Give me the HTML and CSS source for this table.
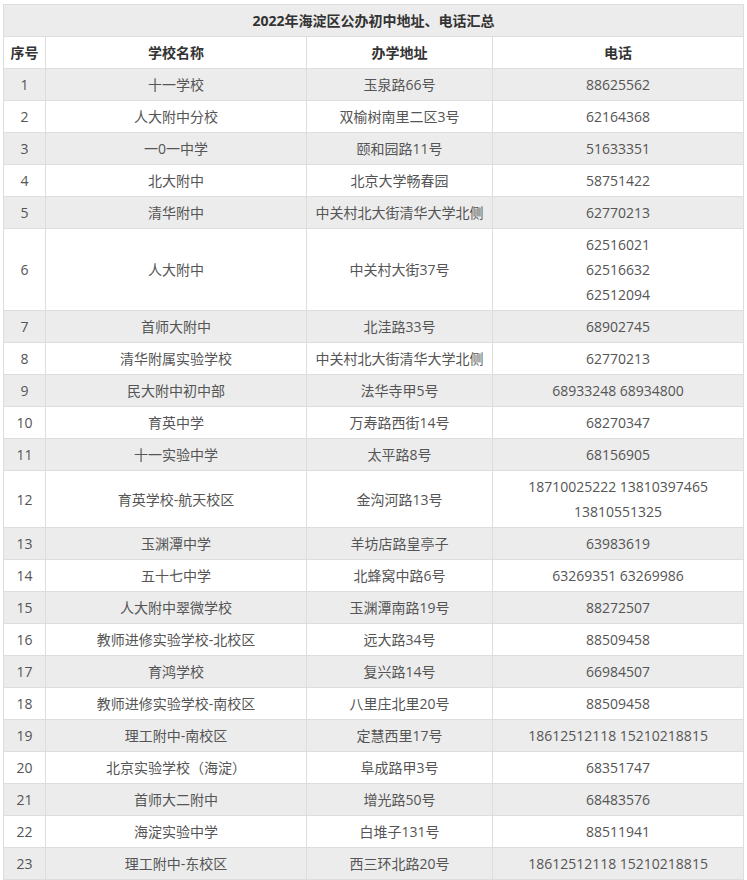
FILE: index.html
```html
<!DOCTYPE html>
<html lang="zh-CN">
<head>
<meta charset="utf-8">
<title>2022年海淀区公办初中地址、电话汇总</title>
<link rel="stylesheet" href="styles.css">
</head>
<body>
<div class="wrap">
<table class="schools">
  <colgroup>
    <col class="c-no"><col class="c-name"><col class="c-addr"><col class="c-tel">
  </colgroup>
  <thead>
    <tr class="title"><th colspan="4">2022年海淀区公办初中地址、电话汇总</th></tr>
    <tr class="head"><th>序号</th><th>学校名称</th><th>办学地址</th><th>电话</th></tr>
  </thead>
  <tbody>
    <tr><td>1</td><td>十一学校</td><td>玉泉路66号</td><td>88625562</td></tr>
    <tr><td>2</td><td>人大附中分校</td><td>双榆树南里二区3号</td><td>62164368</td></tr>
    <tr><td>3</td><td>一0一中学</td><td>颐和园路11号</td><td>51633351</td></tr>
    <tr><td>4</td><td>北大附中</td><td>北京大学畅春园</td><td>58751422</td></tr>
    <tr><td>5</td><td>清华附中</td><td>中关村北大街清华大学北侧</td><td>62770213</td></tr>
    <tr><td>6</td><td>人大附中</td><td>中关村大街37号</td><td>62516021<br>62516632<br>62512094</td></tr>
    <tr><td>7</td><td>首师大附中</td><td>北洼路33号</td><td>68902745</td></tr>
    <tr><td>8</td><td>清华附属实验学校</td><td>中关村北大街清华大学北侧</td><td>62770213</td></tr>
    <tr><td>9</td><td>民大附中初中部</td><td>法华寺甲5号</td><td>68933248 68934800</td></tr>
    <tr><td>10</td><td>育英中学</td><td>万寿路西街14号</td><td>68270347</td></tr>
    <tr><td>11</td><td>十一实验中学</td><td>太平路8号</td><td>68156905</td></tr>
    <tr><td>12</td><td>育英学校-航天校区</td><td>金沟河路13号</td><td>18710025222 13810397465<br>13810551325</td></tr>
    <tr><td>13</td><td>玉渊潭中学</td><td>羊坊店路皇亭子</td><td>63983619</td></tr>
    <tr><td>14</td><td>五十七中学</td><td>北蜂窝中路6号</td><td>63269351 63269986</td></tr>
    <tr><td>15</td><td>人大附中翠微学校</td><td>玉渊潭南路19号</td><td>88272507</td></tr>
    <tr><td>16</td><td>教师进修实验学校-北校区</td><td>远大路34号</td><td>88509458</td></tr>
    <tr><td>17</td><td>育鸿学校</td><td>复兴路14号</td><td>66984507</td></tr>
    <tr><td>18</td><td>教师进修实验学校-南校区</td><td>八里庄北里20号</td><td>88509458</td></tr>
    <tr><td>19</td><td>理工附中-南校区</td><td>定慧西里17号</td><td>18612512118 15210218815</td></tr>
    <tr><td>20</td><td>北京实验学校（海淀）</td><td>阜成路甲3号</td><td>68351747</td></tr>
    <tr><td>21</td><td>首师大二附中</td><td>增光路50号</td><td>68483576</td></tr>
    <tr><td>22</td><td>海淀实验中学</td><td>白堆子131号</td><td>88511941</td></tr>
    <tr><td>23</td><td>理工附中-东校区</td><td>西三环北路20号</td><td>18612512118 15210218815</td></tr>
  </tbody>
</table>
</div>
</body>
</html>
```
FILE: styles.css
```css
html, body {
  margin: 0;
  padding: 0;
  background: #ffffff;
}
.wrap {
  padding: 4px 0 0 3px;
}
.schools {
  width: 740px;
  border-collapse: collapse;
  table-layout: fixed;
  font-family: "Open Sans", "Noto Sans CJK SC", sans-serif;
  font-size: 14px;
  line-height: 25px;
  color: #555555;
}
.c-no { width: 42px; }
.c-name { width: 261px; }
.c-addr { width: 186px; }
.c-tel { width: 251px; }
.schools th,
.schools td {
  border: 1px solid #dddddd;
  padding: 3px 4px;
  text-align: center;
  vertical-align: middle;
}
.schools th {
  color: #333333;
  font-weight: bold;
}
.title th {
  background: #ececec;
}
.head th {
  background: #ffffff;
}
.schools tbody tr:nth-child(odd) td {
  background: #ececec;
}
.schools tbody tr:nth-child(even) td {
  background: #ffffff;
}
```
